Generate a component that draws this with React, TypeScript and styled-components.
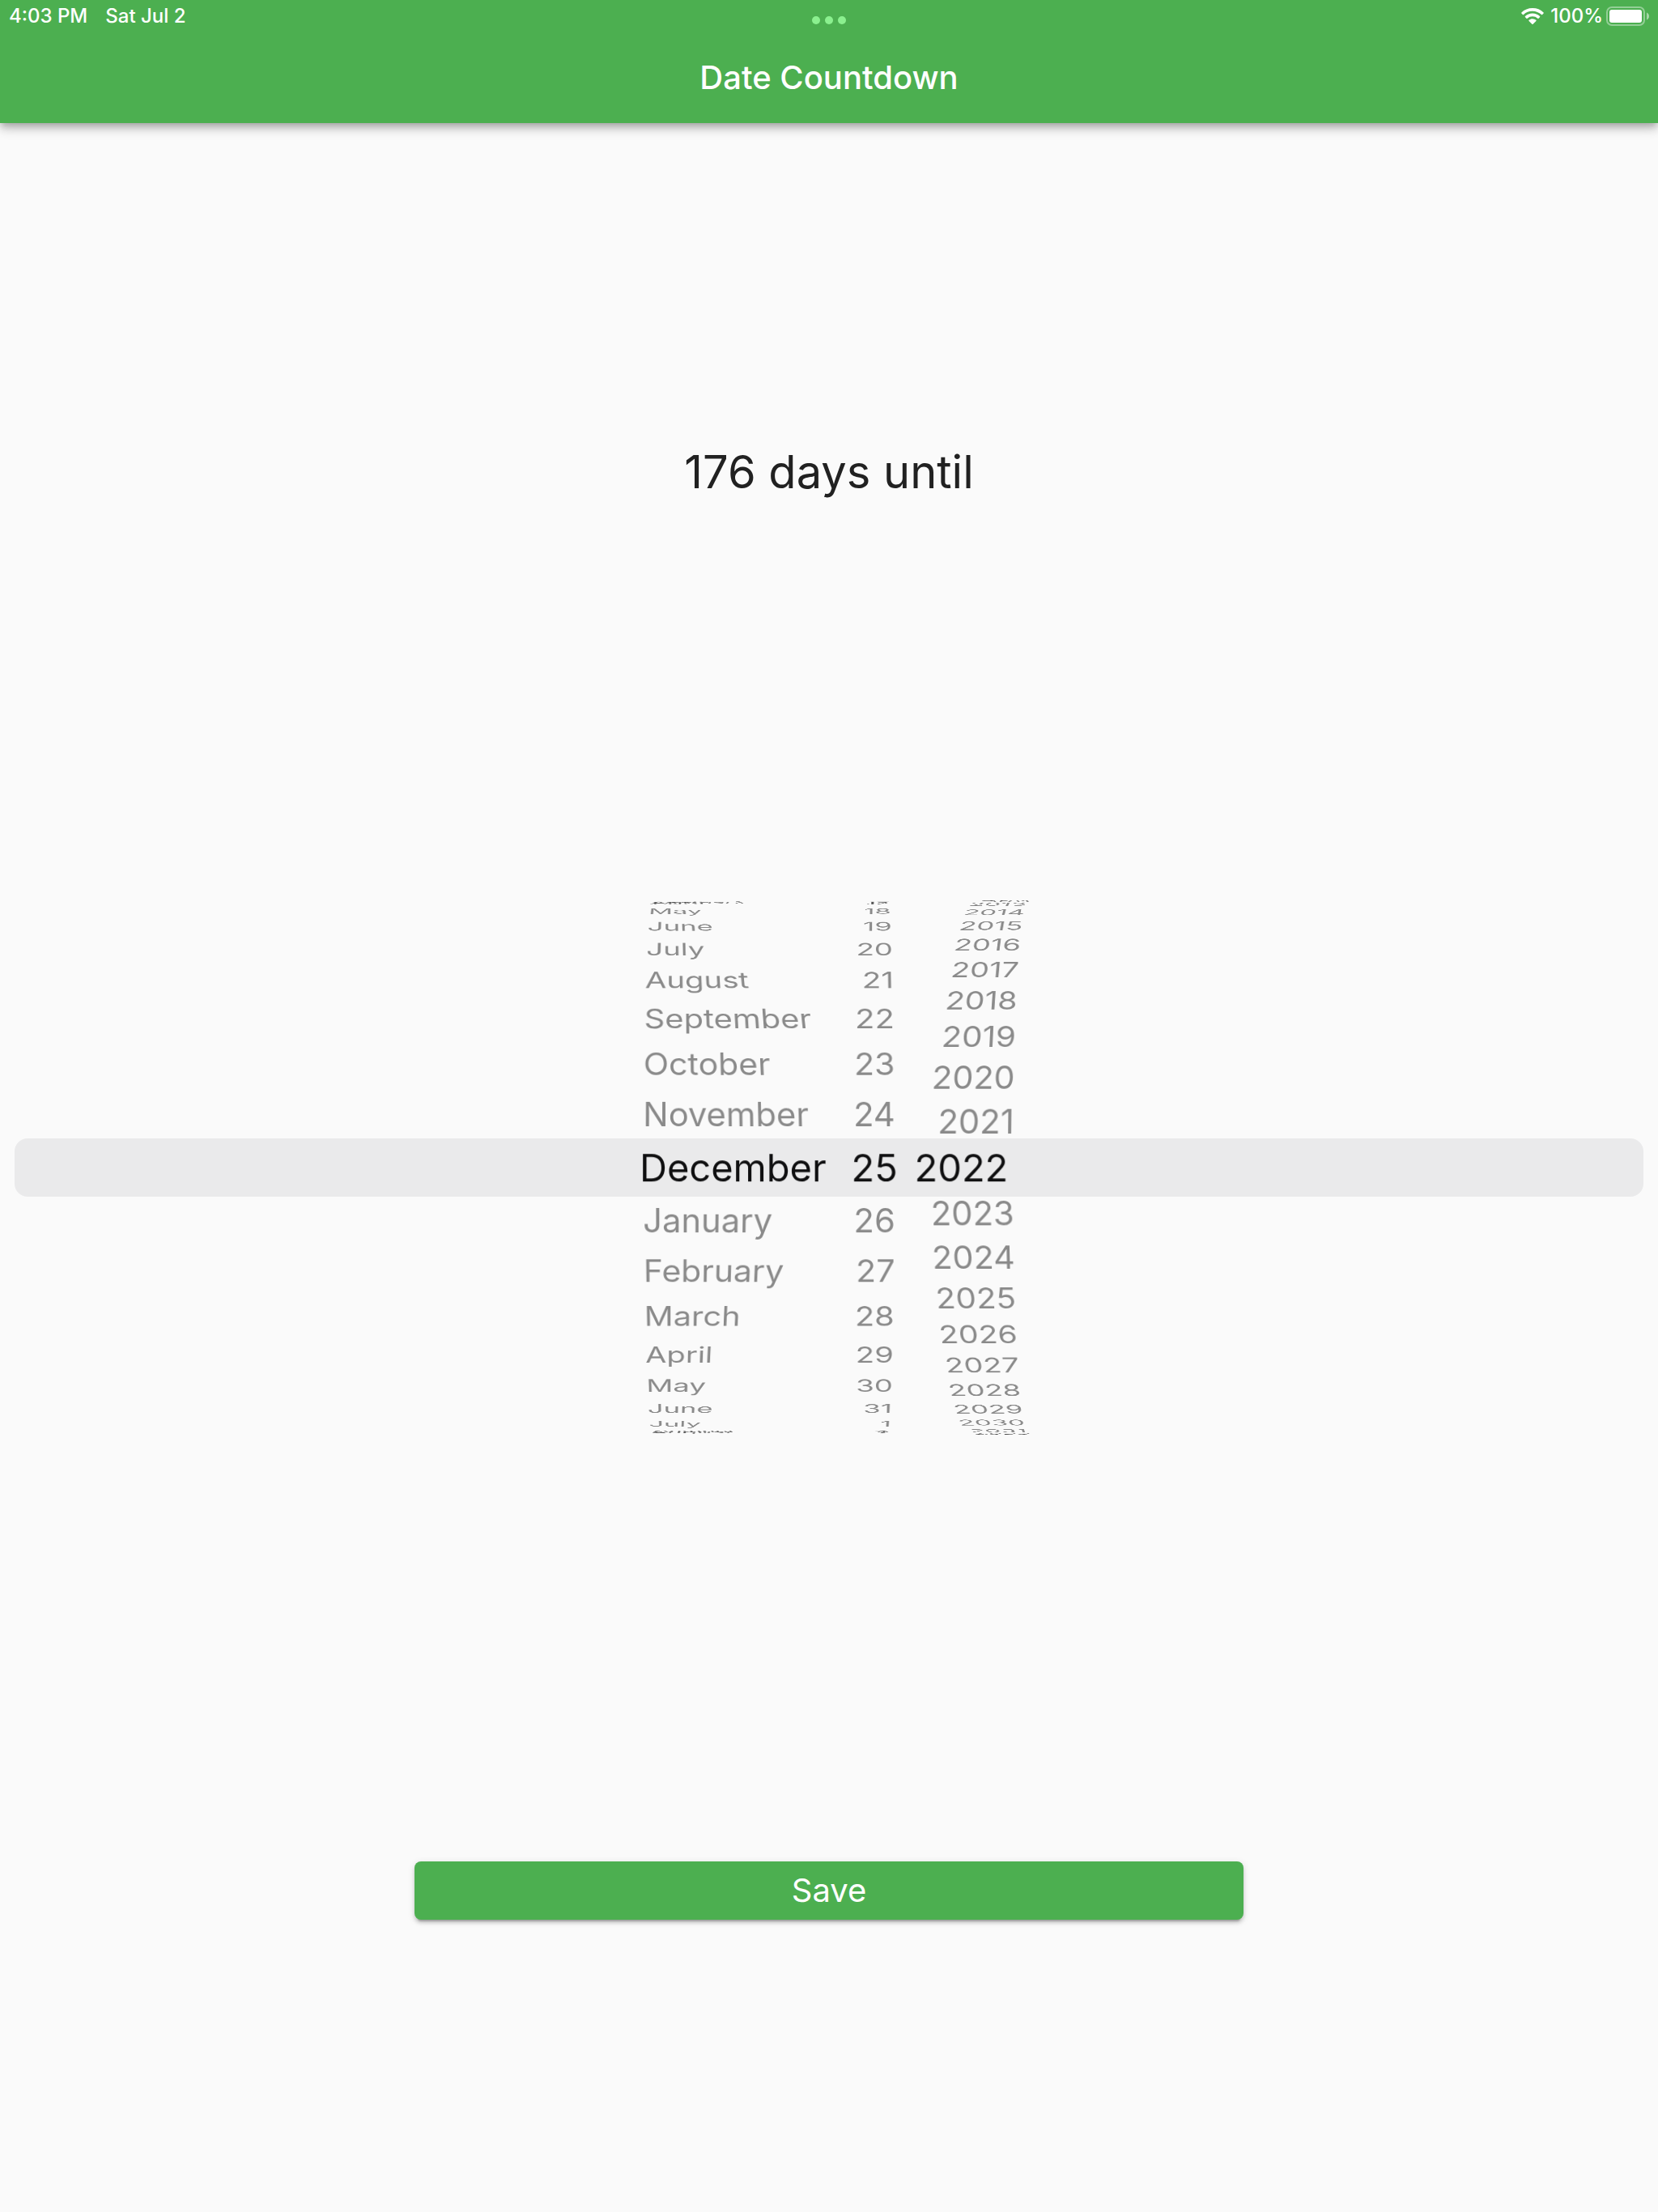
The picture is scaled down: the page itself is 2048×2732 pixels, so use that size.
import React, { useState } from "react";
import styled, { createGlobalStyle } from "styled-components";

const GlobalStyle = createGlobalStyle`
  *, *::before, *::after { box-sizing: border-box; }
  body {
    margin: 0;
    background: #fafafa;
    color: #212121;
    font-family: Inter, "Liberation Sans", sans-serif;
  }
`;

const Page = styled.div`
  display: flex;
  flex-direction: column;
  min-height: 100vh;
  overflow: hidden;
`;

const Header = styled.header`
  position: relative;
  display: flex;
  flex-direction: column;
  background: #4caf50;
  color: #ffffff;
  box-shadow:
    0 4px 8px -2px rgba(0, 0, 0, 0.2),
    0 8px 10px rgba(0, 0, 0, 0.14),
    0 2px 20px rgba(0, 0, 0, 0.12);
`;

const StatusBar = styled.div`
  display: grid;
  grid-template-columns: 1fr auto 1fr;
  align-items: center;
  height: 40px;
  padding: 0 11px;
  font-size: 24px;
  font-weight: 500;
  line-height: 40px;
`;

const StatusGroup = styled.div<{ $end?: boolean }>`
  display: flex;
  align-items: center;
  justify-content: ${(p) => (p.$end ? "flex-end" : "flex-start")};
  gap: ${(p) => (p.$end ? "4px" : "22px")};
`;

const Dots = styled.div`
  display: flex;
  gap: 6px;
  padding-top: 10px;
`;

const Dot = styled.span`
  width: 10px;
  height: 10px;
  border-radius: 50%;
  background: #8bf08f;
`;

const WifiGlyph = styled.svg`
  width: 28px;
  height: 20px;
  margin-right: 4px;
`;

const BatteryGlyph = styled.svg`
  width: 53px;
  height: 24px;
`;

const TitleBar = styled.div`
  display: flex;
  align-items: center;
  justify-content: center;
  height: 112px;
`;

const Title = styled.h1`
  margin: 0;
  font-size: 40px;
  font-weight: 500;
  line-height: 48px;
`;

const Main = styled.main`
  display: flex;
  flex: 1;
  flex-direction: column;
`;

const Section = styled.section`
  display: flex;
  flex: 1 0 0px;
  align-items: center;
  justify-content: center;
`;

const Countdown = styled.p`
  margin: 0;
  padding-top: 68px;
  font-size: 56px;
  line-height: 68px;
`;

const DRUM_RADIUS = 531;
const PICKER_HEIGHT = 992;

const Picker = styled.div`
  position: relative;
  display: grid;
  grid-template-columns: 1034fr 96px 918fr;
  height: ${PICKER_HEIGHT}px;
`;

const SelectionBand = styled.div`
  position: absolute;
  top: 460px;
  left: 18px;
  right: 18px;
  height: 72px;
  border-radius: 16px;
  background: rgba(120, 120, 128, 0.12);
  pointer-events: none;
`;

type Align = "month" | "day" | "year";

const vanish: Record<Align, string> = { month: "80%", day: "50%", year: "20%" };
const edge: Record<Align, string> = {
  month: "0",
  day: "0 24px 0 0",
  year: "0 0 0 18px",
};

const Wheel = styled.ul<{ $kind: Align }>`
  display: grid;
  align-items: center;
  justify-content: ${(p) => (p.$kind === "year" ? "start" : "end")};
  margin: 0;
  padding: ${(p) => edge[p.$kind]};
  list-style: none;
  perspective: 667px;
  perspective-origin: ${(p) => vanish[p.$kind]} 50%;
`;

const WheelItem = styled.li<{ $kind: Align; $selected: boolean }>`
  grid-area: 1 / 1;
  min-width: ${(p) => ({ month: 240, day: 64, year: 104 })[p.$kind]}px;
  height: 64px;
  color: ${(p) => (p.$selected ? "#000000" : "rgba(0, 0, 0, 0.447)")};
  font-size: 42px;
  line-height: 64px;
  text-align: ${(p) => (p.$kind === "month" ? "left" : "right")};
  white-space: nowrap;
  cursor: pointer;
`;

const SaveButton = styled.button`
  width: 50%;
  height: 72px;
  padding: 0;
  border: 0;
  border-radius: 8px;
  background: #4caf50;
  color: #ffffff;
  font-family: inherit;
  font-size: 40px;
  font-weight: 400;
  line-height: 48px;
  cursor: pointer;
  box-shadow:
    0 6px 2px -4px rgba(0, 0, 0, 0.2),
    0 4px 4px rgba(0, 0, 0, 0.14),
    0 2px 10px rgba(0, 0, 0, 0.12);
`;

const MONTHS = [
  "January", "February", "March", "April", "May", "June",
  "July", "August", "September", "October", "November", "December",
];
const TODAY = Date.UTC(2022, 6, 2);
const DAY_MS = 24 * 60 * 60 * 1000;

const wrap = (value: number, size: number) => ((value % size) + size) % size;

interface DrumProps {
  kind: Align;
  label: string;
  /** Angle between two neighbouring rows, in radians. */
  step: number;
  /** Rows drawn on either side of the selected one. */
  reach: number;
  value: number;
  text: (value: number) => string | number;
  onPick: (value: number) => void;
}

function Drum({ kind, label, step, reach, value, text, onPick }: DrumProps) {
  const offsets = Array.from({ length: reach * 2 + 1 }, (_, i) => i - reach);
  return (
    <Wheel $kind={kind} role="listbox" aria-label={label}>
      {offsets.map((offset) => {
        const lift = offset === 0 ? "translateZ(71px) " : "";
        return (
          <WheelItem
            key={offset}
            $kind={kind}
            $selected={offset === 0}
            role="option"
            aria-selected={offset === 0}
            onClick={() => onPick(value + offset)}
            style={{
              transform: `${lift}translateZ(${-DRUM_RADIUS}px) rotateX(${-offset * step}rad) translateZ(${DRUM_RADIUS}px)`,
            }}
          >
            {text(value + offset)}
          </WheelItem>
        );
      })}
    </Wheel>
  );
}

function Wifi() {
  return (
    <WifiGlyph viewBox="0 0 28 20" aria-label="Wi-Fi" role="img">
      <path
        fill="#fff"
        d="M14 0C8.700 0 3.900 2 .4 5.400a.8.8 0 0 0 0 1.100l1.500 1.500c.3.300.8.300 1.100 0A15.800 15.800 0 0 1 14 3.800c4.200 0 8 1.600 11 4.200.3.300.8.300 1.100 0l1.500-1.500a.8.8 0 0 0 0-1.100A19.600 19.600 0 0 0 14 0z"
      />
      <path
        fill="#fff"
        d="M14 6.600c-3.500 0-6.600 1.300-9 3.400a.8.8 0 0 0 0 1.200l1.500 1.500c.3.300.8.300 1.100 0a9.600 9.600 0 0 1 12.800 0c.3.300.8.300 1.100 0l1.500-1.500a.8.8 0 0 0 0-1.200c-2.400-2.100-5.500-3.400-9-3.400z"
      />
      <path
        fill="#fff"
        d="M14 13.200c-1.700 0-3.200.6-4.400 1.600a.8.8 0 0 0 0 1.200l3.800 3.700c.3.300.9.300 1.200 0l3.800-3.700a.8.8 0 0 0 0-1.200 6.900 6.900 0 0 0-4.400-1.600z"
      />
    </WifiGlyph>
  );
}

function Battery() {
  return (
    <BatteryGlyph viewBox="0 0 53 24" aria-label="Battery full" role="img">
      <rect x="1" y="1" width="46" height="22" rx="6" fill="none" stroke="#fff" strokeOpacity="0.4" strokeWidth="2" />
      <rect x="4" y="4" width="40" height="16" rx="3" fill="#fff" />
      <path d="M50 7.500c1.800.8 3 2.400 3 4.500s-1.200 3.700-3 4.500z" fill="#fff" fillOpacity="0.5" />
    </BatteryGlyph>
  );
}

export default function App() {
  const [month, setMonth] = useState(11);
  const [day, setDay] = useState(25);
  const [year, setYear] = useState(2022);
  const days = Math.round((Date.UTC(year, month, day) - TODAY) / DAY_MS);

  return (
    <>
      <GlobalStyle />
      <Page>
        <Header>
          <StatusBar>
            <StatusGroup>
              <span>4:03 PM</span>
              <span>Sat Jul 2</span>
            </StatusGroup>
            <Dots aria-hidden="true">
              <Dot />
              <Dot />
              <Dot />
            </Dots>
            <StatusGroup $end>
              <Wifi />
              <span>100%</span>
              <Battery />
            </StatusGroup>
          </StatusBar>
          <TitleBar>
            <Title>Date Countdown</Title>
          </TitleBar>
        </Header>
        <Main>
          <Section>
            <Countdown>{days} days until</Countdown>
          </Section>
          <Picker>
            <Drum
              kind="month"
              label="Month"
              step={0.12462}
              reach={10}
              value={month}
              text={(v) => MONTHS[wrap(v, 12)]}
              onPick={(v) => setMonth(wrap(v, 12))}
            />
            <Drum
              kind="day"
              label="Day"
              step={0.12462}
              reach={10}
              value={day}
              text={(v) => wrap(v - 1, 31) + 1}
              onPick={(v) => setDay(wrap(v - 1, 31) + 1)}
            />
            <Drum
              kind="year"
              label="Year"
              step={0.10743}
              reach={11}
              value={year}
              text={(v) => v}
              onPick={setYear}
            />
            <SelectionBand />
          </Picker>
          <Section>
            <SaveButton type="button">Save</SaveButton>
          </Section>
        </Main>
      </Page>
    </>
  );
}
